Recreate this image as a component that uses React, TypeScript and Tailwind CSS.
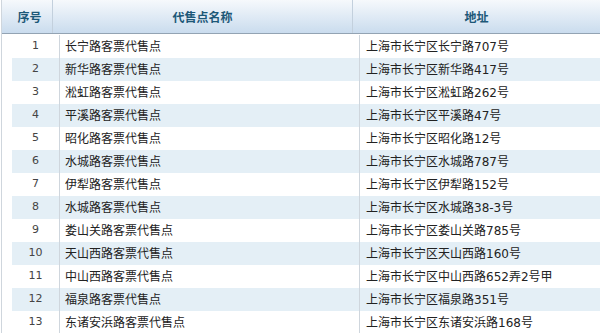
import React from "react";

const rows: [string, string][] = [
  ["长宁路客票代售点", "上海市长宁区长宁路707号"],
  ["新华路客票代售点", "上海市长宁区新华路417号"],
  ["淞虹路客票代售点", "上海市长宁区淞虹路262号"],
  ["平溪路客票代售点", "上海市长宁区平溪路47号"],
  ["昭化路客票代售点", "上海市长宁区昭化路12号"],
  ["水城路客票代售点", "上海市长宁区水城路787号"],
  ["伊犁路客票代售点", "上海市长宁区伊犁路152号"],
  ["水城路客票代售点", "上海市长宁区水城路38-3号"],
  ["娄山关路客票代售点", "上海市长宁区娄山关路785号"],
  ["天山西路客票代售点", "上海市长宁区天山西路160号"],
  ["中山西路客票代售点", "上海市长宁区中山西路652弄2号甲"],
  ["福泉路客票代售点", "上海市长宁区福泉路351号"],
  ["东诸安浜路客票代售点", "上海市长宁区东诸安浜路168号"],
];

const font = { fontFamily: '"DejaVu Sans", "Noto Sans CJK SC", sans-serif' };
const cjk = { fontFamily: '"Noto Sans CJK SC", sans-serif' };

export default function App() {
  return (
    <div className="w-[600px] h-[333px] overflow-hidden bg-white" style={font}>
      <div className="ml-[1px] border-l border-[#cfd6dd] h-full">
        <div className="flex h-[34px] border-b border-[#93a3b3] bg-gradient-to-b from-[#f6f9fc] to-[#cadcee] text-[12px] font-bold text-[#1d5878]" style={cjk}>
          <div className="w-[51px] border-r border-[#c3d0dd] flex items-center justify-center pl-[5px]">序号</div>
          <div className="w-[300px] border-r border-[#c3d0dd] flex items-center justify-center">代售点名称</div>
          <div className="flex-1 flex items-center justify-center">地址</div>
        </div>
        <div className="pt-[1px] pl-[10px]">
          {rows.map(([name, addr], i) => (
            <div
              key={i}
              className={`flex h-[23px] items-center text-[12px] text-[#222] ${i % 2 === 1 ? "bg-[#e4eff6]" : "bg-white"}`}
            >
              <div className="w-[48px] h-full border-r border-[#cfd6dd] flex items-center justify-center text-[11px] text-[#444]">
                {i + 1}
              </div>
              <div className="w-[300px] h-full border-r border-[#cfd6dd] flex items-center pl-[5px]">{name}</div>
              <div className="flex-1 h-full flex items-center pl-[6px]">{addr}</div>
            </div>
          ))}
        </div>
      </div>
    </div>
  );
}
